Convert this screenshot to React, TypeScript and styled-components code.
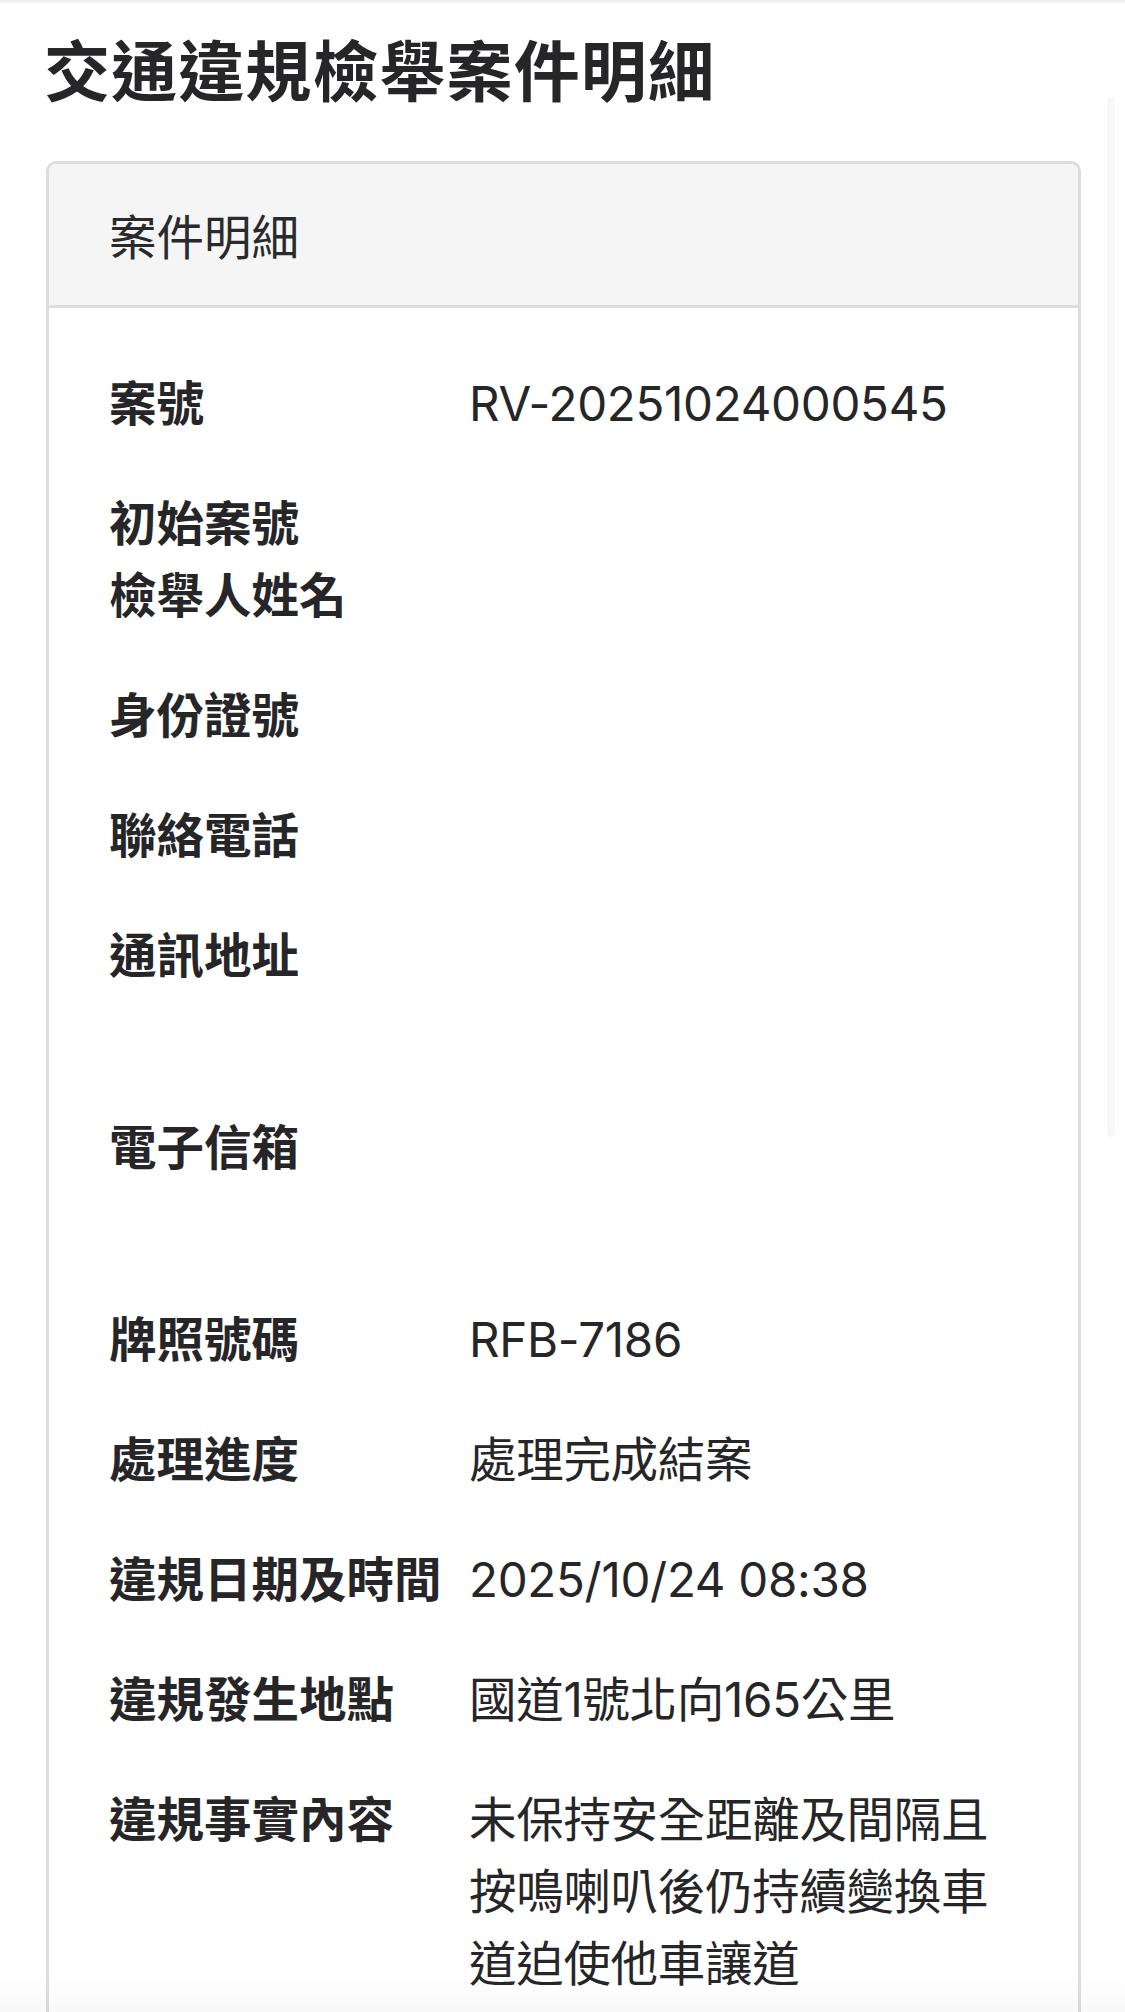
import styled, { createGlobalStyle } from 'styled-components';

const GlobalStyle = createGlobalStyle`
  html, body {
    margin: 0;
    padding: 0;
    background: #fff;
  }
  body {
    font-family: "Inter", "Noto Sans CJK TC", sans-serif;
    color: #262628;
  }
  * {
    box-sizing: border-box;
  }
`;

type Field = {
  label: string;
  lines: string[];
  tight?: boolean;
};

// 遮蔽的個資欄位只保留行數
const fields: Field[] = [
  { label: '案號', lines: ['RV-20251024000545'] },
  { label: '初始案號', lines: [], tight: true },
  { label: '檢舉人姓名', lines: [''] },
  { label: '身份證號', lines: [''] },
  { label: '聯絡電話', lines: [''] },
  { label: '通訊地址', lines: ['', ''] },
  { label: '電子信箱', lines: ['', ''] },
  { label: '牌照號碼', lines: ['RFB-7186'] },
  { label: '處理進度', lines: ['處理完成結案'] },
  { label: '違規日期及時間', lines: ['2025/10/24 08:38'] },
  { label: '違規發生地點', lines: ['國道1號北向165公里'] },
  { label: '違規事實內容', lines: ['未保持安全距離及間隔且按鳴喇叭後仍持續變換車道迫使他車讓道'] },
];

const App = () => {
  return (
    <Page>
      <GlobalStyle />
      <TopShade />
      <Content>
        <Title>交通違規檢舉案件明細</Title>
        <Card>
          <CardHeader>案件明細</CardHeader>
          <CardBody>
            {fields.map((f) => (
              <Row key={f.label} $tight={f.tight}>
                <Label>{f.label}</Label>
                <Value $lines={f.lines.length}>
                  {f.lines.map((line, i) => (
                    <Line key={i}>{line || '\u00a0'}</Line>
                  ))}
                </Value>
              </Row>
            ))}
          </CardBody>
        </Card>
      </Content>
      <ScrollThumb />
      <BottomFade />
    </Page>
  );
};

const Page = styled.div`
  position: relative;
  min-height: 2012px;
`;
const TopShade = styled.div`
  height: 5px;
  background: linear-gradient(#ececec, #fff);
`;
const Content = styled.div`
  padding: 30px 44px 0 46px;
`;
const Title = styled.h1`
  margin: 0 0 0 -2px;
  font-size: 66px;
  line-height: 74px;
  font-weight: 700;
  color: #262628;
  letter-spacing: 1.1px;
`;
const Card = styled.div`
  margin-top: 52px;
  border: 3px solid #dddddd;
  border-radius: 10px;
  background: #fff;
  overflow: hidden;
`;
const CardHeader = styled.div`
  height: 144px;
  display: flex;
  align-items: center;
  padding: 0 60px;
  background: #f5f5f5;
  border-bottom: 3px solid #dddddd;
  font-size: 47.5px;
  font-weight: 400;
  color: #2a2a2c;
`;
const CardBody = styled.div`
  padding: 60px 60px 80px;
`;
const Row = styled.div<{ $tight?: boolean }>`
  display: grid;
  grid-template-columns: 360px 1fr;
  margin-bottom: ${(p) => (p.$tight ? 0 : 48)}px;
`;
const Label = styled.div`
  font-size: 47.5px;
  line-height: 72px;
  font-weight: 700;
  color: #262628;
  white-space: nowrap;
`;
const Value = styled.div<{ $lines: number }>`
  min-height: ${(p) => p.$lines * 72}px;
  font-size: 47.5px;
  line-height: 72px;
  font-weight: 400;
  color: #262628;
  letter-spacing: -0.3px;
`;
const Line = styled.div``;
const ScrollThumb = styled.div`
  position: absolute;
  top: 97px;
  right: 10px;
  width: 8px;
  height: 1040px;
  border-radius: 4px;
  background: #f7f7f7;
`;
const BottomFade = styled.div`
  position: absolute;
  left: 0;
  right: 0;
  top: 1975px;
  height: 37px;
  background: linear-gradient(rgba(0, 0, 0, 0), rgba(0, 0, 0, 0.025));
  pointer-events: none;
`;

export default App;
